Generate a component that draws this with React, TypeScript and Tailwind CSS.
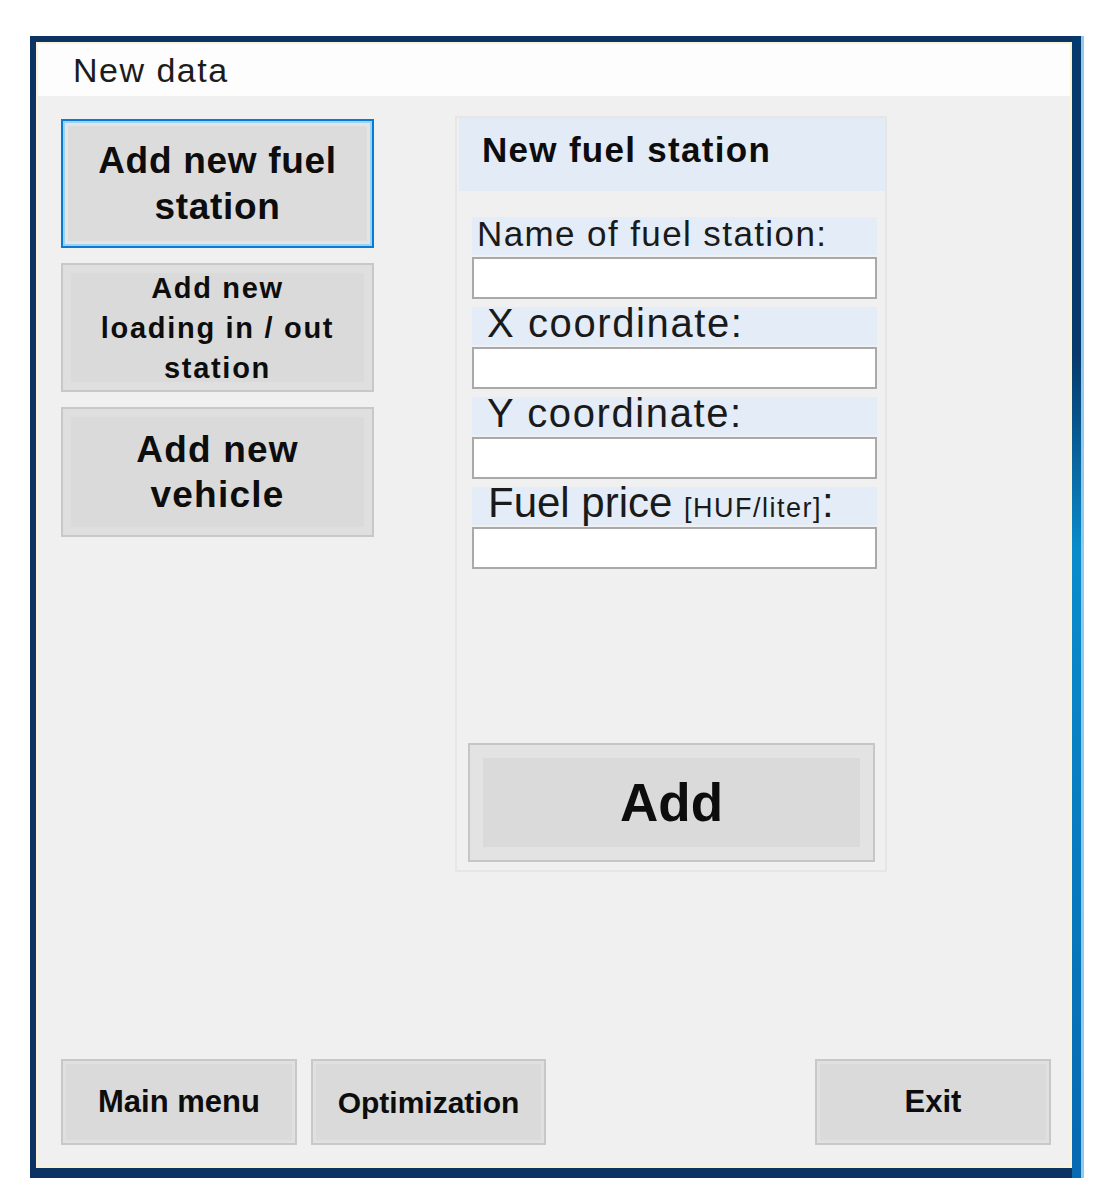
import React from 'react';

const fields = [
    { id: 'name', pad: 'pl-[5px]', text: 'text-[35px] tracking-[1.4px] leading-[34px]', label: 'Name of fuel station:' },
    { id: 'x', pad: 'pl-[15px]', text: 'text-[40px] tracking-[1.6px] leading-[32px]', label: 'X coordinate:' },
    { id: 'y', pad: 'pl-[15px]', text: 'text-[40px] tracking-[1.6px] leading-[32px]', label: 'Y coordinate:' },
];

function SideButton({ active, className, children }: { active?: boolean; className: string; children: React.ReactNode }) {
    return (
        <button
            type="button"
            className={`w-[313px] flex items-center justify-center text-center font-bold text-[#0d0d0d] ${
                active
                    ? 'border-2 border-[#0a7ad4] bg-[#dcdcdc] shadow-[inset_0_0_0_2px_#9ad4f5,inset_0_0_0_5px_#e4e4e4]'
                    : 'border-2 border-[#c8c8c8] bg-[#dadada] shadow-[inset_0_0_0_8px_#dfdfdf]'
            } ${className}`}
        >
            {children}
        </button>
    );
}

function FooterButton({ label, className }: { label: string; className?: string }) {
    return (
        <button
            type="button"
            className={`w-[236px] h-[86px] border-2 border-[#c8c8c8] bg-[#dadada] shadow-[inset_0_0_0_3px_#e0e0e0] text-[31px] font-bold text-[#0d0d0d] ${className || ''}`}
        >
            {label}
        </button>
    );
}

export default function App() {
    return (
        <div className="w-[1117px] min-h-[1204px] bg-white pt-[36px] pl-[30px] font-['Liberation_Sans',Arial,sans-serif]">
            <div className="flex w-[1054px] h-[1142px]">
                {/* window frame: left / top / bottom */}
                <div className="flex flex-1 flex-col border-l-[6px] border-t-[6px] border-b-[10px] border-[#0b3464]">
                    <div className="flex flex-1 flex-col border-2 border-[#fbf3d6]">
                        <div className="h-[52px] bg-[#fdfdfd] pl-[35px] text-[34px] tracking-[1.5px] leading-[52px] text-[#1c1c1c]">
                            New data
                        </div>

                        <div className="flex flex-1 flex-col bg-[#f0f0f0] pl-[23px] pr-[19px] pt-[20px] pb-[21px]">
                            <div className="flex items-start">
                                <div className="mt-[3px] flex flex-col gap-[15px]">
                                    <SideButton active className="h-[129px] text-[37px] tracking-[0.7px] leading-[46px]">
                                        Add new fuel<br />station
                                    </SideButton>
                                    <SideButton className="h-[129px] text-[29px] tracking-[1.7px] leading-[40px]">
                                        Add new<br />loading in / out<br />station
                                    </SideButton>
                                    <SideButton className="h-[130px] text-[37px] tracking-[1.2px] leading-[45px]">
                                        Add new<br />vehicle
                                    </SideButton>
                                </div>

                                {/* New fuel station panel */}
                                <div className="ml-[81px] w-[432px] h-[756px] flex flex-col border-2 border-[#e6e6e6] bg-[#f0f0f0]">
                                    <div className="ml-[2px] h-[73px] bg-[#e3ebf6] pl-[23px] pt-[12px] text-[35px] font-bold tracking-[1.3px] leading-[40px] text-[#0d0d0d]">
                                        New fuel station
                                    </div>

                                    <div className="mt-[26px] ml-[15px] mr-[8px] flex flex-col">
                                        {fields.map(f => (
                                            <div key={f.id} className="mb-[8px]">
                                                <div className={`h-[38px] bg-[#e3ecf7] text-[#1a1a1a] whitespace-nowrap ${f.pad} ${f.text}`}>
                                                    {f.label}
                                                </div>
                                                <input type="text" className="mt-[2px] block w-full h-[42px] border-2 border-[#a9a9a9] bg-white outline-none" />
                                            </div>
                                        ))}
                                        <div>
                                            <div className="h-[38px] bg-[#e3ecf7] pl-[16px] text-[42px] leading-[32px] text-[#1a1a1a] whitespace-nowrap">
                                                Fuel price <span className="text-[27px] tracking-[1.5px]">[HUF/liter]</span>:
                                            </div>
                                            <input type="text" className="mt-[2px] block w-full h-[42px] border-2 border-[#a9a9a9] bg-white outline-none" />
                                        </div>
                                    </div>

                                    <div className="flex-1" />
                                    <button
                                        type="button"
                                        className="ml-[11px] mb-[8px] w-[407px] h-[119px] border-2 border-[#c6c6c6] bg-[#dadada] shadow-[inset_0_0_0_13px_#e3e3e3] text-[53px] font-bold text-[#0d0d0d]"
                                    >
                                        Add
                                    </button>
                                </div>
                            </div>

                            <div className="flex-1" />
                            <div className="flex items-end">
                                <FooterButton label="Main menu" />
                                <FooterButton label="Optimization" className="ml-[14px] !w-[235px] !text-[30px]" />
                                <FooterButton label="Exit" className="ml-auto" />
                            </div>
                        </div>
                    </div>
                </div>

                {/* right frame edge */}
                <div className="w-[12px] border-r-[3px] border-[#93c9ec] bg-linear-to-b from-[#073a6c] from-[28%] via-[#0a8ccc] via-[45%] to-[#0769b2]" />
            </div>
        </div>
    );
}
